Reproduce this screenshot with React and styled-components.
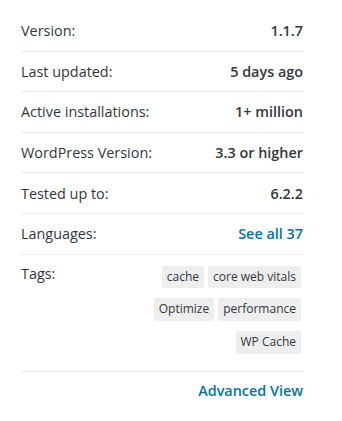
import styled, { createGlobalStyle } from "styled-components";

const meta = [
  { label: "Version:", value: "1.1.7" },
  { label: "Last updated:", value: "5 days ago" },
  { label: "Active installations:", value: "1+ million" },
  { label: "WordPress Version:", value: "3.3 or higher" },
  { label: "Tested up to:", value: "6.2.2" },
  { label: "Languages:", value: "See all 37", link: true },
];

const tags = ["cache", "core web vitals", "Optimize", "performance", "WP Cache"];

const App = () => {
  return (
    <>
      <GlobalStyle />
      <Sidebar>
        <MetaList>
          {meta.map((item) => (
            <MetaRow key={item.label}>
              <span>{item.label}</span>
              {item.link ? (
                <LinkValue href="#">{item.value}</LinkValue>
              ) : (
                <Value>{item.value}</Value>
              )}
            </MetaRow>
          ))}
          <TagsRow>
            <span>Tags:</span>
            <TagList>
              {tags.map((tag) => (
                <Tag key={tag} href="#">
                  {tag}
                </Tag>
              ))}
            </TagList>
          </TagsRow>
        </MetaList>
        <Footer>
          <LinkValue href="#">Advanced View</LinkValue>
        </Footer>
      </Sidebar>
    </>
  );
};

export default App;

const GlobalStyle = createGlobalStyle`
  body {
    margin: 0;
    background: #fff;
    font-family: "Open Sans", "Noto Sans", sans-serif;
    color: #32373c;
  }
`;

const Sidebar = styled.div`
  width: 282px;
  padding: 11px 0 0 21px;
`;

const MetaList = styled.ul`
  list-style: none;
  margin: 0;
  padding: 0;
`;

const MetaRow = styled.li`
  display: flex;
  justify-content: space-between;
  align-items: center;
  height: 39.6px;
  border-bottom: 1px solid #eee;
  font-size: 14.4px;
`;

const Value = styled.strong`
  font-weight: 600;
`;

const LinkValue = styled.a`
  font-weight: 600;
  font-size: 14.4px;
  color: #0073aa;
  text-decoration: none;
`;

const TagsRow = styled.li`
  display: flex;
  justify-content: space-between;
  align-items: flex-start;
  padding: 9px 0 17.5px;
  border-bottom: 1px solid #eee;
  font-size: 14.4px;
  line-height: 20px;
`;

const TagList = styled.div`
  display: flex;
  flex-wrap: wrap;
  justify-content: flex-end;
  column-gap: 4px;
  row-gap: 10px;
  width: 170px;
  margin: 2px 2px 0 0;
`;

const Tag = styled.a`
  display: inline-block;
  height: 22.7px;
  padding: 0 5px;
  background: #eee;
  border-radius: 2px;
  font-size: 12px;
  line-height: 22.7px;
  color: #32373c;
  text-decoration: none;
`;

const Footer = styled.div`
  display: flex;
  justify-content: flex-end;
  padding-top: 9px;
  line-height: 20px;
`;
